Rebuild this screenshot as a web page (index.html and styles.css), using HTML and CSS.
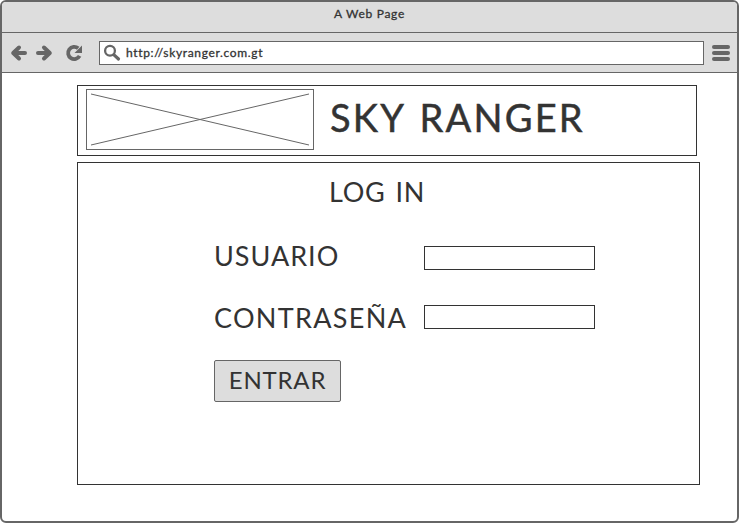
FILE: index.html
```html
<!DOCTYPE html>
<html lang="es">
<head>
<meta charset="utf-8">
<title>A Web Page</title>
<link rel="stylesheet" href="styles.css">
</head>
<body>
<div class="window">
  <div class="titlebar"><span class="title">A Web Page</span></div>
  <div class="toolbar">
    <svg class="nav" width="90" height="24" viewBox="0 0 90 24" fill="none" stroke="#666" stroke-width="4" stroke-linecap="round" stroke-linejoin="round">
      <path d="M17 6.500L11.200 12L17 17.500M12 12H23"/>
      <path d="M42 6.500L47.800 12L42 17.500M36 12H47"/>
      <path d="M76.200 7.300A6.100 6.100 0 1 0 77.600 14.800" stroke-width="3.800" stroke-linecap="butt"/>
      <path d="M80 4.500V12H72.500Z" fill="#666" stroke="none"/>
    </svg>
    <div class="address">
      <svg width="18" height="18" viewBox="0 0 18 18" fill="none" stroke="#666" stroke-linecap="round">
        <circle cx="7" cy="6.800" r="4.900" stroke-width="2.300"/>
        <path d="M11 10.800L15.500 15" stroke-width="3.200"/>
      </svg>
      <span class="url">http://skyranger.com.gt</span>
    </div>
    <div class="menu"><i></i><i></i><i></i></div>
  </div>
  <main class="page">
    <header class="banner">
      <svg class="logo" width="228" height="61" viewBox="0 0 228 61" fill="none" stroke="#666">
        <rect x=".5" y=".5" width="227" height="60"/>
        <path d="M5 5L223 56M5 56L223 5"/>
      </svg>
      <h1 class="brand">SKY RANGER</h1>
    </header>
    <form class="login">
      <h2 class="heading">LOG IN</h2>
      <label class="label user" for="user">USUARIO</label>
      <input class="field" id="user" type="text">
      <label class="label pass" for="pass">CONTRASEÑA</label>
      <input class="field" id="pass" type="password">
      <button class="submit" type="button">ENTRAR</button>
    </form>
  </main>
</div>
</body>
</html>
```
FILE: styles.css
```css
* { box-sizing: border-box; }
body {
  margin: 0;
  background: #fff;
  color: #333;
  font-family: Lato, "Liberation Sans", sans-serif;
}
.window {
  width: 739px;
  height: 523px;
  border: 2px solid #666;
  border-radius: 6px;
  overflow: hidden;
}
.titlebar {
  height: 31px;
  background: #ddd;
  border-bottom: 1px solid #666;
  text-align: center;
}
.title {
  display: block;
  padding-top: 4px;
  font-size: 12px;
  line-height: 15px;
  letter-spacing: .7px;
  -webkit-text-stroke: .3px #333;
}
.toolbar {
  display: flex;
  align-items: center;
  height: 40px;
  background: #ddd;
  border-bottom: 1px solid #666;
}
.nav { flex: none; margin-right: 7px; }
.address {
  display: flex;
  align-items: center;
  width: 605px;
  height: 24px;
  padding-left: 3px;
  border: 1px solid #666;
  background: #fff;
}
.url {
  margin-left: 5px;
  padding-top: 1px;
  font-size: 12px;
  line-height: 16px;
  letter-spacing: .66px;
  -webkit-text-stroke: .3px #333;
}
.menu { display: grid; gap: 2px; margin-left: 8px; }
.menu i { width: 18px; height: 4px; border-radius: 2px; background: #666; }
.page { padding: 12px 0 0 75px; }
.banner {
  display: flex;
  width: 620px;
  height: 71px;
  padding: 3px 0 0 8px;
  border: 1px solid #333;
}
.brand {
  margin: 4px 0 0 16px;
  font-size: 38px;
  font-weight: 400;
  line-height: 48px;
  letter-spacing: 2.2px;
  word-spacing: 3px;
  white-space: nowrap;
  -webkit-text-stroke: .5px #333;
}
.login {
  display: grid;
  grid-template-columns: 210px 171px;
  grid-template-rows: 83px 59px 55px 42px;
  align-items: start;
  width: 623px;
  height: 323px;
  margin-top: 6px;
  padding-left: 136px;
  border: 1px solid #333;
}
.heading, .label {
  margin: 0;
  font-size: 27px;
  font-weight: 400;
  line-height: 32px;
  white-space: nowrap;
}
.heading { grid-column: 1 / 3; padding: 13px 0 0 115px; letter-spacing: .7px; word-spacing: 2.5px; }
.user { margin-top: -6px; letter-spacing: 1px; }
.pass { margin-top: -3px; letter-spacing: 1.3px; }
.field {
  width: 171px;
  height: 24px;
  margin: 0;
  padding: 0 4px;
  border: 1px solid #333;
  background: #fff;
}
.submit {
  width: 127px;
  height: 42px;
  padding: 0 0 3px;
  border: 1px solid #666;
  border-radius: 2px;
  background: #ddd;
  color: #333;
  font: 24px/30px Lato, "Liberation Sans", sans-serif;
  letter-spacing: .8px;
}
```
